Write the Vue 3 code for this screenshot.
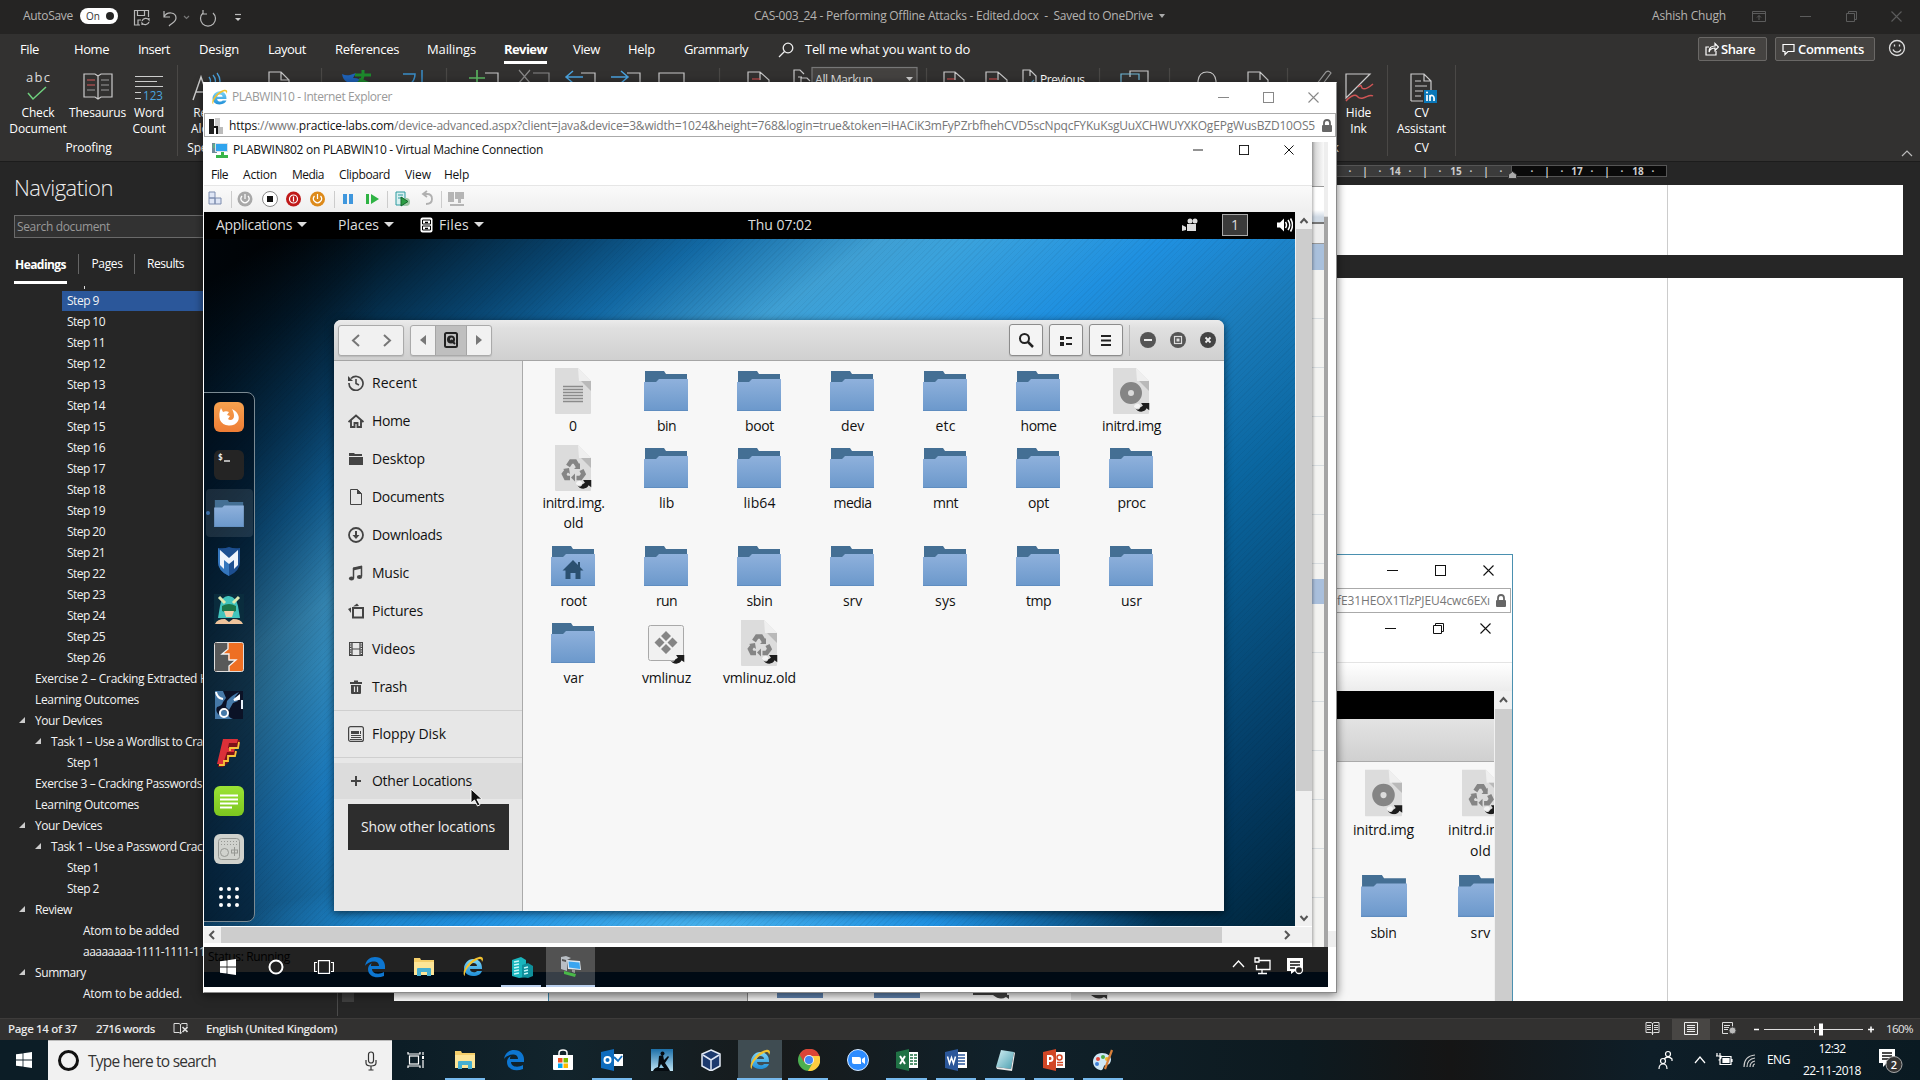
<script setup>
// Spreads a label over a known width, so that labels keep their column in the bars.
const vW = {
  mounted(el, { value }) {
    const natural = el.getBoundingClientRect().width
    const count = el.textContent.trim().length || 1
    el.style.letterSpacing = (value - natural) / count + 'px'
    el.style.flex = 'none'
  }
}

const tabs = [
  ['File', 20, 19], ['Home', 74, 35], ['Insert', 138, 32], ['Design', 199, 40], ['Layout', 268, 38],
  ['References', 335, 64], ['Mailings', 427, 49], ['Review', 504, 43], ['View', 573, 27], ['Help', 628, 27],
  ['Grammarly', 684, 64]
].map((t, i, all) => ({ label: t[0], w: t[2], gap: t[1] - (i ? all[i - 1][1] + all[i - 1][2] : 0) }))

const outline = [
  ...Array.from({ length: 18 }, (_, i) => ({ t: 'Step ' + (i + 9), x: 67, w: i ? 38 : 32, on: i === 0 })),
  { t: 'Exercise 2 – Cracking Extracted Hashes', x: 35, w: 204 },
  { t: 'Learning Outcomes', x: 35, w: 104 },
  { t: 'Your Devices', x: 35, w: 67, tri: true },
  { t: 'Task 1 – Use a Wordlist to Crack', x: 51, w: 163, tri: true },
  { t: 'Step 1', x: 67, w: 32 },
  { t: 'Exercise 3 – Cracking Passwords', x: 35, w: 167 },
  { t: 'Learning Outcomes', x: 35, w: 104 },
  { t: 'Your Devices', x: 35, w: 67, tri: true },
  { t: 'Task 1 – Use a Password Cracker', x: 51, w: 168, tri: true },
  { t: 'Step 1', x: 67, w: 32 },
  { t: 'Step 2', x: 67, w: 32 },
  { t: 'Review', x: 35, w: 37, tri: true },
  { t: 'Atom to be added', x: 83, w: 96 },
  { t: 'aaaaaaaa-1111-1111-1111', x: 83, w: 135 },
  { t: 'Summary', x: 35, w: 51, tri: true },
  { t: 'Atom to be added.', x: 83, w: 99 }
]

const menus = [
  ['File', 211, 17], ['Action', 243, 34], ['Media', 292, 32], ['Clipboard', 339, 51], ['View', 405, 26], ['Help', 444, 25]
].map((t, i, all) => ({ label: t[0], w: t[2], gap: t[1] - (i ? all[i - 1][1] + all[i - 1][2] : 204) }))

const dock = ['firefox', 'terminal', 'folder', 'msf', 'armitage', 'burp', 'maltego', 'faraday', 'leafpad', 'tweak', 'grid']

const places = [
  ['Recent', 'recent', 45], ['Home', 'home', 38], ['Desktop', 'desk', 53], ['Documents', 'docs', 72], ['Downloads', 'down', 70],
  ['Music', 'music', 37], ['Pictures', 'pics', 51], ['Videos', 'video', 43], ['Trash', 'trash', 35]
]

const files = [
  [['0', 'text', 9], ['bin', 'folder', 19], ['boot', 'folder', 29], ['dev', 'folder', 23], ['etc', 'folder', 20], ['home', 'folder', 36], ['initrd.img', 'disc', 59]],
  [['initrd.img.', 'recycle', 62, 'old'], ['lib', 'folder', 15], ['lib64', 'folder', 32], ['media', 'folder', 38], ['mnt', 'folder', 25], ['opt', 'folder', 21], ['proc', 'folder', 28]],
  [['root', 'root', 26], ['run', 'folder', 21], ['sbin', 'folder', 26], ['srv', 'folder', 19], ['sys', 'folder', 21], ['tmp', 'folder', 25], ['usr', 'folder', 21]],
  [['var', 'folder', 20], ['vmlinuz', 'exe', 49], ['vmlinuz.old', 'recycle', 73]]
]

const apps = [
  ['taskview', 0], ['explorer', 1], ['edge', 0], ['store', 0], ['outlook', 1], ['kindle', 0], ['vbox', 0], ['ie', 2],
  ['chrome', 1], ['zoomapp', 0], ['excel', 1], ['word', 1], ['notepad', 1], ['ppt', 1], ['paint', 1]
]
const innerApps = [['edge', 0], ['explorer', 0], ['ie', 0], ['server', 1], ['vm', 2]]
const ruler = [['·', 1350], ['|', 1365], ['·', 1380], ['14', 1395], ['·', 1410], ['|', 1425], ['·', 1440], ['15', 1456], ['·', 1471], ['|', 1486], ['·', 1501], ['', 1516], ['·', 1532], ['|', 1547], ['·', 1562], ['17', 1577], ['·', 1592], ['|', 1607], ['·', 1622], ['18', 1638], ['·', 1653]]
</script>

<template>
  <div class="screen">
    <svg class="defs" width="0" height="0">
      <defs>
        <linearGradient id="gF" x1="0" y1="0" x2="0" y2="1"><stop offset="0" stop-color="#8fb1dc" /><stop offset="1" stop-color="#6b98cb" /></linearGradient>
        <linearGradient id="gO" x1="0" y1="0" x2="0" y2="1"><stop offset="0" stop-color="#f7a24f" /><stop offset="1" stop-color="#ee7d35" /></linearGradient>
        <linearGradient id="gG" x1="0" y1="0" x2="0" y2="1"><stop offset="0" stop-color="#9be335" /><stop offset="1" stop-color="#7cc61f" /></linearGradient>
        <linearGradient id="gI" x1="0" y1="0" x2="0" y2="1"><stop offset="0" stop-color="#7fd6f8" /><stop offset="1" stop-color="#1f8fd8" /></linearGradient>
        <linearGradient id="gK" x1="0" y1="0" x2="0" y2="1"><stop offset="0" stop-color="#1c6fa8" /><stop offset="1" stop-color="#bfe4f4" /></linearGradient>
        <linearGradient id="gN" x1="0" y1="0" x2="1" y2="1"><stop offset="0" stop-color="#d6f1f5" /><stop offset="1" stop-color="#4a9fb0" /></linearGradient>
        <symbol id="link" viewBox="0 0 16 11"><path d="M0 6c2 3 5 3 6 0l3-2-2-3h9v8l-3-2c-2 5-10 5-13-1z" fill="#1d1d1d" /><path d="M-1 5c2-4 7-4 7 0-1 2-5 3-7 0z" fill="#f4f4f4" /></symbol>
        <symbol id="folder" viewBox="0 0 44 40"><path d="M1 0h19l2 3h21v10H1z" fill="#446f94" /><path d="M0 11h12l3-3h29v32H0z" fill="url(#gF)" /><path d="M0 39.5h44" stroke="#5f8dc0" /></symbol>
        <symbol id="root" viewBox="0 0 44 40"><use href="#folder" width="44" height="40" /><path d="M22 14l-10.500 10.500h3V33h5v-6h5v6h5v-8.500h3L29 21v-5h-2v3z" fill="#2b5070" /></symbol>
        <symbol id="sheet" viewBox="0 0 38 46"><path d="M1 0h23l13 13v32q0 1-1 1H2q-1 0-1-1z" fill="#dcdcdc" /><path d="M24 0l13 13H25z" fill="#efefef" /><path d="M27 13h10v10z" fill="#b9b9b9" /></symbol>
        <symbol id="text" viewBox="0 0 38 46"><use href="#sheet" width="38" height="46" /><path d="M9 18.500h20M9 21.500h20M9 24.500h20M9 27.500h20M9 30.500h20M9 33.500h20" stroke="#8b8b8b" stroke-width="1.300" /></symbol>
        <symbol id="disc" viewBox="0 0 38 46"><use href="#sheet" width="38" height="46" /><circle cx="19" cy="25" r="7" fill="none" stroke="#858585" stroke-width="8" /><use href="#link" x="22" y="34" width="16" height="10" /></symbol>
        <symbol id="recycle" viewBox="0 0 38 46"><use href="#sheet" width="38" height="46" /><g fill="none" stroke="#858585" stroke-width="4.500"><path d="M14 21l3-4.500h4l3 5" /><path d="M27.500 25l2 4-3 4h-4" /><path d="M16 33h-4l-2-4 3-4" /></g><path d="M26 18v6h-6zM21 28.500v8l-4-4zM9 24l6-1 1 6z" fill="#858585" /><use href="#link" x="22" y="34" width="16" height="10" /></symbol>
        <symbol id="exe" viewBox="0 0 38 46"><rect x="1.500" y="5.500" width="35" height="35" rx="2" fill="#f1f1f1" stroke="#a9a9a9" /><path d="M19 11l5 5-5 5-5-5zM19 24l5 5-5 5-5-5zM12.500 17.500l5 5-5 5-5-5zM25.500 17.500l5 5-5 5-5-5z" fill="#858585" /><use href="#link" x="22" y="34" width="16" height="10" /></symbol>

        <symbol id="firefox" viewBox="0 0 30 30"><rect width="30" height="30" rx="6" fill="url(#gO)" /><path d="M7 6l2 4c2-1 4-1 6 0l-2 3 3 1-2 3c2 2 6 1 6-3 0-3-1-5-2-7 6 3 8 8 6 12a10 9 0 0 1-18-1c-1-4-1-8 1-12z" fill="#fff" /></symbol>
        <symbol id="terminal" viewBox="0 0 30 30"><rect width="30" height="30" rx="6" fill="#242424" /><text x="4" y="10" font-family="DejaVu Sans Mono, monospace" font-size="8" font-weight="bold" fill="#eee">$</text><path d="M10 11h6" stroke="#fff" stroke-width="1.300" /></symbol>
        <symbol id="msf" viewBox="0 0 30 30"><path d="M4 2q6 1 11-1 5 2 11 1v14q0 9-11 14Q4 25 4 16z" fill="#1d4f91" /><path d="M4 2l11 13v15Q4 25 4 16z" fill="#3476bd" /><path d="M6 4l9 8 9-8v15l-4 4V14l-5 4-5-4v9l-4-4z" fill="#eef3fb" /></symbol>
        <symbol id="armitage" viewBox="0 0 30 30"><rect width="30" height="30" fill="#0a2c3d" /><path d="M6 12Q8 1 15 2t9 10l2 12H4z" fill="#42c4bd" /><path d="M5 3l6 6M25 3l-6 6" stroke="#dfe8b0" stroke-width="3" /><path d="M8 12q7-4 14 0v5q-7 3-14 0z" fill="#1c7548" /><path d="M10 17h10l-2 6h-6z" fill="#f3cfa8" /><path d="M1 30q2-5 10-5l4 3 4-3q8 0 10 5z" fill="#f0c49c" /></symbol>
        <symbol id="burp" viewBox="0 0 30 30"><rect x=".5" y=".5" width="29" height="29" rx="2" fill="#ee6f23" stroke="#ddd" /><path d="M1 1h13v6l-6 5h6v6h7l-6 6v5H1z" fill="#595959" /><path d="M14 1v6l-6 5h7v6h7l-7 6v5" fill="none" stroke="#f3f3f3" stroke-width="1.300" /></symbol>
        <symbol id="maltego" viewBox="0 0 30 30"><rect x="1" y="1" width="28" height="28" fill="#4579a8" /><path d="M9 1h20v28H19q-4-1-5-5-1-4-5-4-5 0-4 5-4-4-2-8 5-1 6-5l3-4z" fill="#0b1226" /><path d="M13 11Q18 5 25 2l-4 5 3 4-5 2-4 7-3-3z" fill="#4579a8" /><path d="M2 2q1 6 7 7M20 10l5-4v3z" fill="none" stroke="#fff" stroke-width="2" /><circle cx="10" cy="23" r="4" fill="none" stroke="#fff" stroke-width="2" /><path d="M28 10v9" stroke="#e8f1fa" stroke-width="2" /></symbol>
        <symbol id="faraday" viewBox="0 0 30 30"><path d="M9 2h17l-1 8h-6v3h4l-2 6h-5l-2 6-5 4H4z" fill="#7d1018" /><path d="M9 1h15l-1 4H15l-1 5h7l-1 4h-7l-4 12H3z" fill="#dc3038" /><path d="M25 4l-1 6h-8v3M22 13l-1 5h-7v5h-4v4H5" fill="none" stroke="#f7c33a" stroke-width="1.800" /></symbol>
        <symbol id="leafpad" viewBox="0 0 30 30"><rect width="30" height="30" rx="6" fill="url(#gG)" /><path d="M6 9.500h18M6 13.500h18M6 17.500h18M6 21.500h12" stroke="#fff" stroke-width="2" /></symbol>
        <symbol id="tweak" viewBox="0 0 30 30"><rect width="30" height="30" rx="6" fill="#d0d2cd" /><g fill="none" stroke="#969893"><rect x="4.500" y="4.500" width="21" height="21" rx="3" /><circle cx="10.500" cy="18.500" r="4" /><rect x="17.500" y="16" width="6" height="3" /><path d="M20.500 13v9" /><path d="M7 7.500h17M7 10.500h17" stroke-dasharray="1 2" /></g></symbol>
        <symbol id="grid" viewBox="0 0 30 30"><g fill="#fff"><circle v-for="n in 9" :key="n" :cx="7 + ((n - 1) % 3) * 8" :cy="7 + Math.floor((n - 1) / 3) * 8" r="2" /></g></symbol>

        <symbol id="recent" viewBox="0 0 16 16"><path d="M3 3.500A7 7 0 1 1 1 8" fill="none" stroke="#444" stroke-width="1.700" /><path d="M0 1v5h5z" fill="#444" /><path d="M8 4v4.500l3 1.500" fill="none" stroke="#444" stroke-width="1.600" /></symbol>
        <symbol id="home" viewBox="0 0 16 16"><path d="M.5 9L8 2.500 15.500 9M3 7.500V14h3.500v-4h3v4H13V7.500" fill="none" stroke="#444" stroke-width="1.900" /></symbol>
        <symbol id="desk" viewBox="0 0 16 16"><path d="M1 2h5l1 1h7v2H1zM1 6h14v8H1z" fill="#444" /></symbol>
        <symbol id="docs" viewBox="0 0 16 16"><path d="M2.500.500h7l4 4v11h-11z" fill="none" stroke="#444" /><path d="M9 0l5 5H9z" fill="#444" /></symbol>
        <symbol id="down" viewBox="0 0 16 16"><circle cx="8" cy="8" r="7" fill="none" stroke="#444" stroke-width="1.800" /><path d="M8 4v5" stroke="#444" stroke-width="2" /><path d="M4.500 8h7L8 12z" fill="#444" /></symbol>
        <symbol id="music" viewBox="0 0 16 16"><path d="M5.500 13V3.500L13.500 2v9.500" fill="none" stroke="#444" stroke-width="1.500" /><path d="M5 2.500l9-2v3l-9 2z" fill="#444" /><ellipse cx="3.500" cy="13.500" rx="2.600" ry="2" fill="#444" /><ellipse cx="11.500" cy="12" rx="2.600" ry="2" fill="#444" /></symbol>
        <symbol id="pics" viewBox="0 0 16 16"><rect x="5" y="5" width="10" height="9.500" fill="none" stroke="#444" stroke-width="2" /><path d="M5 3.500l4-3 2 2.500zM0 6l3-1.500V10z" fill="#444" /></symbol>
        <symbol id="video" viewBox="0 0 16 16"><path d="M2.500 1v14M13.500 1v14" stroke="#444" stroke-width="2" stroke-dasharray="1.200 1.200" /><path d="M1.500 1v14M14.500 1v14M1 1.500h14M1 14.500h14" stroke="#444" /><path d="M4 1.500v13M12 1.500v13M4 8h8" stroke="#444" stroke-width="1.200" /></symbol>
        <symbol id="trash" viewBox="0 0 16 16"><path d="M2 3h12v2H2zM6 1.500h4V3H6zM3 6h10v8q0 1-1 1H4q-1 0-1-1z" fill="#444" /><path d="M6.500 7.500v5.500M9.500 7.500v5.500" stroke="#e6e6e6" stroke-width="1.200" /></symbol>
        <symbol id="floppy" viewBox="0 0 16 16"><rect x=".6" y=".6" width="14.800" height="14.800" rx="2" fill="none" stroke="#444" stroke-width="1.200" /><path d="M3 5h8v3H3zM12 5h1v3h-1z" fill="#444" /><path d="M3 9.500h10M3 11.500h10M2 13.500h12" stroke="#444" stroke-width="1.200" /></symbol>

        <symbol id="win" viewBox="0 0 16 16"><path d="M0 2.300L6.600 1.400V7.600H0zM7.400 1.300L16 0V7.600H7.400zM0 8.400h6.600v6.200L0 13.700zM7.400 8.400H16V16l-8.600-1.300z" fill="#fff" /></symbol>
        <symbol id="taskview" viewBox="0 0 18 18"><g fill="none" stroke="#fff" stroke-width="1.200"><rect x="2.500" y="5" width="9" height="8" /><path d="M1 1v2h12V1M1 17v-2h12v2M16 1v3M16 9v8" /></g><rect x="15" y="5" width="2" height="3" fill="#fff" /></symbol>
        <symbol id="explorer" viewBox="0 0 22 22"><path d="M1 2h6l1 2h13v15H1z" fill="#f5cf6b" /><path d="M1 6h20v13H1z" fill="#fde597" /><path d="M4 20v-7q0-1 1-1h12q1 0 1 1v7h-4v-4H8v4z" fill="#46afd2" /></symbol>
        <symbol id="edge" viewBox="0 0 22 22"><path d="M1 10C2 4 6 1 11 1c7 0 10 5 10 9v3H8c0 5 7 6 12 3v4c-7 3-16 1-16-7 0-3 2-5 4-6-1 1-1 2-1 3h8c0-7-11-5-14 0z" fill="#0d76d1" /></symbol>
        <symbol id="ie" viewBox="0 0 22 22"><path d="M11 3c5 0 9 3 9 9v1H8c0 4 6 4 7 2h5c-1 3-4 5-9 5-6 0-9-4-9-8s4-9 9-9zm-3 7h7c0-4-7-4-7 0z" fill="url(#gI)" /><path d="M3 20c-5-3 4-17 14-19 4-.8 5 2 3 5 0-3-2-4-5-2C7 8 2 16 3 20z" fill="#f2c230" /></symbol>
        <symbol id="store" viewBox="0 0 22 22"><path d="M7 6V4q0-3 4-3t4 3v2" fill="none" stroke="#fff" stroke-width="1.500" /><path d="M1 6h20v14q0 1-1 1H2q-1 0-1-1z" fill="#fff" /><path d="M6 9h4.500v4.500H6z" fill="#f25022" /><path d="M11.500 9H16v4.500h-4.500z" fill="#7fba00" /><path d="M6 14.500h4.500V19H6z" fill="#00a4ef" /><path d="M11.500 14.500H16V19h-4.500z" fill="#ffb900" /></symbol>
        <symbol id="outlook" viewBox="0 0 22 22"><path d="M12 5h10v12H12z" fill="#fff" /><path d="M13 8l4 4 4-5" fill="none" stroke="#0f6cbd" stroke-width="1.800" /><path d="M0 3l13-3v22L0 19z" fill="#0f6cbd" /><circle cx="6.500" cy="11" r="3" fill="none" stroke="#fff" stroke-width="2" /></symbol>
        <symbol id="kindle" viewBox="0 0 22 22"><rect width="22" height="22" fill="url(#gK)" /><circle cx="11.500" cy="4.500" r="2" fill="#050b10" /><path d="M8 7l4-1 1 5 4-4 1 1-4 6 4 6 1 2H2q1-3 5-4z" fill="#050b10" /><path d="M10 15l3 4h-5z" fill="#8cc4df" /></symbol>
        <symbol id="vbox" viewBox="0 0 22 22"><path d="M11 1l9 4v12l-9 5-9-5V5z" fill="#1d3a6e" stroke="#e5ecf7" stroke-width="1.500" /><path d="M3 6l8 5v10M11 11l8-5" fill="none" stroke="#dfe7f5" stroke-width="1.500" /></symbol>
        <symbol id="chrome" viewBox="0 0 22 22"><circle cx="11" cy="11" r="11" fill="#4caf50" /><path d="M1.500 5.500A11 11 0 0 1 21.500 7H11l-5 6z" fill="#db4437" /><path d="M21.500 7A11 11 0 0 1 10 22l5-8.500L13 7z" fill="#ffcd40" /><circle cx="11" cy="11" r="5" fill="#f1f1f1" /><circle cx="11" cy="11" r="4" fill="#4285f4" /></symbol>
        <symbol id="zoomapp" viewBox="0 0 22 22"><circle cx="11" cy="11" r="10.500" fill="#2d8cff" stroke="#d8eaff" /><path d="M5 8h7q2 0 2 2v5H7q-2 0-2-2zM15 10l3-2v7l-3-2z" fill="#fff" /></symbol>
        <symbol id="excel" viewBox="0 0 22 22"><path d="M12 3h10v16H12z" fill="#fff" /><path d="M14 6h3M18 6h3M14 9h3M18 9h3M14 12h3M18 12h3M14 15h3M18 15h3" stroke="#207245" stroke-width="1.500" /><path d="M0 3l13-3v22L0 19z" fill="#207245" /><path d="M4 7l5 8M9 7l-5 8" stroke="#fff" stroke-width="2" /></symbol>
        <symbol id="word" viewBox="0 0 22 22"><path d="M12 3h10v16H12z" fill="#fff" /><path d="M13 6h7M13 9h7M13 12h7M13 15h7" stroke="#2b579a" stroke-width="1.400" /><path d="M0 3l13-3v22L0 19z" fill="#2b579a" /><path d="M2.500 7.500l2 7 2-6 2 6 2-7" fill="none" stroke="#fff" stroke-width="1.500" /></symbol>
        <symbol id="notepad" viewBox="0 0 22 22"><path d="M7 1l13 2-3 17-15-2z" fill="url(#gN)" /><path d="M2 18l15 2 3-17 1 1-3 18-15-2z" fill="#e9e9e9" /></symbol>
        <symbol id="ppt" viewBox="0 0 22 22"><path d="M12 3h10v16H12z" fill="#fff" /><circle cx="16.500" cy="8.500" r="2.500" fill="none" stroke="#d24726" stroke-width="1.500" /><path d="M14 13.500h6M14 16h6" stroke="#d24726" stroke-width="1.400" /><path d="M0 3l13-3v22L0 19z" fill="#d24726" /><path d="M5 16V7h2.500q2 0 2 2.500T7 12H5" fill="none" stroke="#fff" stroke-width="2" /></symbol>
        <symbol id="paint" viewBox="0 0 22 22"><path d="M10 4c7 0 11 5 8 10-2 3-5 1-6 3s-1 5-4 4C-3 18 0 4 10 4z" fill="#cfe7f6" /><circle cx="6" cy="10" r="2" fill="#e5473c" /><circle cx="11" cy="8" r="2" fill="#4bab45" /><circle cx="5" cy="15" r="2" fill="#3f7fd6" /><circle cx="15" cy="10" r="2" fill="#f0b429" /><path d="M20 1l-7 19" stroke="#d9803a" stroke-width="2.200" /></symbol>
        <symbol id="server" viewBox="0 0 22 22"><path d="M1 4l9-3 5 3v17l-7 1-7-2z" fill="#19b5bd" /><path d="M11 9l6-2 5 3v10l-5 2-6-1z" fill="#0e8f9b" /><path d="M3 6l5-1M3 9l5-1M3 12l5-1M3 15l5-1M3 18l5-1M13 12l4-1M13 15l4-1M13 18l4-1" stroke="#c5f6f8" stroke-width="1.500" /></symbol>
        <symbol id="vm" viewBox="0 0 22 22"><path d="M1 1l5-1 5 2-4 2v11l-6-2z" fill="#b9bec4" /><path d="M2 3l4 1v2L2 5z" fill="#555" /><path d="M7 4l13 1 1 9-13-1z" fill="#dfe7ee" /><path d="M8.500 5.500l11 1 .6 6.500-11-1.500z" fill="#3aa5f0" /><path d="M12 13l3 1v3l-3-1z" fill="#999" /><path d="M4 15l12 3-1 3-11-3z" fill="#49b848" /></symbol>
        <symbol id="lock" viewBox="0 0 12 14"><path d="M3 7V4q0-3 3-3t3 3v3" fill="none" stroke="#666" stroke-width="1.800" /><rect x="1" y="6" width="10" height="7" rx="1" fill="#666" /></symbol>
        <symbol id="min" viewBox="0 0 11 11"><path d="M0 5.500h11" stroke="currentColor" /></symbol>
        <symbol id="max" viewBox="0 0 11 11"><rect x=".5" y=".5" width="10" height="10" fill="none" stroke="currentColor" /></symbol>
        <symbol id="rest" viewBox="0 0 11 11"><path d="M.5 2.500h8v8h-8zM2.500 2.500v-2h8v8h-2" fill="none" stroke="currentColor" /></symbol>
        <symbol id="x" viewBox="0 0 11 11"><path d="M.5.500l10 10M10.500.500l-10 10" stroke="currentColor" stroke-width="1.100" /></symbol>
      </defs>
    </svg>

    <!-- Word -->
    <div class="word">
      <header class="title">
        <span v-w="50" class="auto">AutoSave</span>
        <span class="toggle"><b>On</b><i></i></span>
        <svg class="qat" width="110" height="18" viewBox="0 0 110 18" fill="none" stroke="#b9b9b9" stroke-width="1.200">
          <path d="M7 16H1.500V1.500h14V8M4.500 1.500v5h7v-5M5 16v-5h3" /><path d="M9 12a4 4 0 0 1 7-1v-2M16 13a4 4 0 0 1-7 1v2" />
          <path d="M31 2v6h6M31 8c3-6 12-5 12 1 0 4-4 5-7 8" /><path d="M51 7l2.500 2.500L56 7" stroke="#777" />
          <path d="M70 4a7.500 7.500 0 1 0 10 0M70 1v4h4" /><path d="M102 5.500h6" /><path d="M102 9h6l-3 3z" fill="#ccc" stroke="none" />
        </svg>
        <span v-w="399" class="docname">CAS-003_24 - Performing Offline Attacks - Edited.docx&nbsp; -&nbsp; Saved to OneDrive</span>
        <i class="caret"></i>
        <span v-w="74" class="user">Ashish Chugh</span>
        <svg class="dim a" width="14" height="11" fill="none" stroke="#5c5c5c"><path d="M.5.500h13v10H.500zM0 2.500h14M7 9V4.500M5 6.500l2-2 2 2" /></svg>
        <svg class="dim b" width="11" height="11"><use href="#min" /></svg>
        <svg class="dim c" width="11" height="11"><use href="#rest" /></svg>
        <svg class="dim d" width="11" height="11"><use href="#x" /></svg>
      </header>

      <nav class="tabs">
        <span v-for="t in tabs" :key="t.label" class="tab" :class="{ on: t.label === 'Review' }" :style="{ marginLeft: t.gap + 'px' }"><span v-w="t.w">{{ t.label }}</span></span>
        <svg class="find" width="16" height="16" fill="none" stroke="#eee" stroke-width="1.300"><circle cx="10" cy="6" r="4.800" /><path d="M6.500 9.500L1 15" /></svg>
        <span v-w="165" class="tell">Tell me what you want to do</span>
        <span class="btn share"><svg width="14" height="14" fill="none" stroke="#fff" stroke-width="1.200"><path d="M4 5H1v8h10V9M4 10c0-4 2-6 6-6V1.500L13.500 5 10 8.500V6C7 6 5 7 4 10z" /></svg><b v-w="34">Share</b></span>
        <span class="btn comm"><svg width="13" height="13" fill="none" stroke="#fff" stroke-width="1.200"><path d="M1 1.500h11v7H6l-3 3v-3H1z" /></svg><b v-w="66">Comments</b></span>
        <svg class="smile" width="18" height="18" fill="none" stroke="#ddd" stroke-width="1.300"><circle cx="9" cy="9" r="7.500" /><path d="M5 10.500c1.500 3.500 6.500 3.500 8 0M6.500 5.500v2M11.500 5.500v2" /></svg>
      </nav>

      <div class="ribbon">
        <section class="grp proof">
          <div class="cmds">
            <div class="cmd c1"><svg width="30" height="34"><text x="3" y="14" font-family="Open Sans, sans-serif" font-size="13" fill="#ddd" textLength="24">abc</text><path d="M6 24l5 6L24 18" transform="translate(-1 1)" fill="none" stroke="#6fd07e" stroke-width="1.500" /></svg><span>Check<br>Document</span></div>
            <div class="cmd c2"><svg width="30" height="34" fill="none" stroke="#ccc" stroke-width="1.200"><path d="M15 8v23M1 6h11l3 2 3-2h11v23H18l-3 2-3-2H1z" /><path d="M18 12h8M18 17h8M18 22h8M4 22h8" stroke="#999" /><path d="M4 12h8M4 17h8" stroke="#d25a5a" /></svg><span>Thesaurus</span></div>
            <div class="cmd c3"><svg width="30" height="34"><path d="M1 8.500h28M1 13.500h22M1 18.500h28M1 24.500h6M1 30.500h6" stroke="#ccc" stroke-width="1.200" /><text x="9" y="32" font-family="Open Sans, sans-serif" font-size="13" fill="#4aa3df" textLength="20" lengthAdjust="spacingAndGlyphs">123</text></svg><span>Word<br>Count</span></div>
          </div>
          <label>Proofing</label>
        </section>
        <section class="grp speech">
          <div class="cmds"><div class="cmd"><svg width="30" height="34" fill="none"><path d="M1 32L9 9l8 23M4 24h10" stroke="#ccc" stroke-width="1.400" /><path d="M17 9q3 4 0 8M21 7q5 6 0 12M25 5q6 8 0 16" stroke="#4aa3df" stroke-width="1.300" /></svg><span>Read<br>Aloud</span></div></div>
          <label>Speech</label>
        </section>
        <svg class="strip" width="1105" height="20" fill="none" stroke="#c8c8c8" stroke-width="1.200">
          <path d="M34 20V7h12l8 8v5M46 7v8h8" /><path d="M86.500 3v17M211.500 3v17M484.500 3v17M691.500 3v17M864.500 3v17M934.500 3v17M1052.500 3v17" stroke="#4a4846" />
          <path d="M107 9q4 2 8 1l6-2-3 5q8 0 8 4h-14q-4-2-5-8z" fill="#1e62b8" stroke="none" /><path d="M120 10h16M128 5v6q-1 6-7 8M124 14l11 5" stroke="#1d8a2c" stroke-width="3" />
          <path d="M168 9h12q0 7-6 11M187 5v15" stroke="#3a8dc8" stroke-width="1.500" />
          <path d="M250 8h13v12" /><path d="M242 5v15M234 13h16" stroke="#5dbb63" stroke-width="1.600" />
          <path d="M298 8h16v12" stroke="#888" /><path d="M284 5l11 13M295 5l-11 13" stroke="#888" />
          <path d="M346 8h14v12M392 8h13v12M424 20V8h25v12" /><path d="M331 12h17M338 6l-7 6 7 6M376 12h17M386 6l7 6-7 6" stroke="#4aa3df" stroke-width="1.500" />
          <path d="M513 20V7h12l9 8v5M525 7v8M559 20V5h6l4 4M563 12h4M566 20v-7h6l3 3" /><path d="M517 14h8M712 14h8M754 14h8" stroke="#e05050" />
          <path d="M709 20V7h11l9 8v5M720 7v8M751 20V7h12l9 8v5M763 7v8M788 20V5h7l6 6v9M795 5v6" /><path d="M791 17l3 3 5-5" stroke="#4a8fb8" />
          <path d="M895 12V6h18v14" /><path d="M886 20v-11h18v6" stroke="#6fb8d8" />
          <path d="M963 20v-4q1-9 9-9t9 9v4M1013 20V7h12l8 8v5M1025 7v8" /><path d="M1081 20l10-13q3-2 5 1l-9 12" stroke="#999" />
          <rect x="577" y="2.500" width="105" height="20" fill="#444240" stroke="#777" /><path d="M671 12h7l-3.500 4z" fill="#ccc" stroke="none" />
          <text x="580" y="19" font-family="Open Sans, sans-serif" font-size="12.500" fill="#ddd" stroke="none" textLength="58">All Markup</text>
          <text x="805" y="19" font-family="Open Sans, sans-serif" font-size="12" fill="#fff" stroke="none" textLength="45">Previous</text>
        </svg>
        <section class="grp ink">
          <div class="cmds"><div class="cmd"><svg width="30" height="34" fill="none"><path d="M2 6h24L2 30z" stroke="#ccc" stroke-width="1.200" /><path d="M2 33c6-7 10-6 11-5s2 3 6 2 7-4 10-2M14 19c4-3 3-1 4 1 2 2 5 1 11-4" stroke="#d05555" stroke-width="1.500" /></svg><span>Hide<br>Ink</span></div></div>
          <label>Ink</label>
        </section>
        <section class="grp cv">
          <div class="cmds"><div class="cmd"><svg width="30" height="34" fill="none"><path d="M4 33V6h13l7 7v11M17 6v7h7M4 33h12M8 13h6M8 18h12M8 23h8M8 28h6" stroke="#ccc" stroke-width="1.200" /><rect x="17" y="22" width="13" height="13" fill="#0a77b8" /><path d="M20 27v6M23 33v-6M23 30q0-3 2.300-2.500t1.700 5.500" stroke="#fff" stroke-width="1.700" /><circle cx="20" cy="24.500" r="1" fill="#fff" /></svg><span>CV<br>Assistant</span></div></div>
          <label>CV</label>
        </section>
        <svg class="fold" width="12" height="8" fill="none" stroke="#bbb" stroke-width="1.200"><path d="M1 7l5-5 5 5" /></svg>
      </div>

      <div class="body">
        <aside class="nav">
          <h1><span v-w="99">Navigation</span></h1>
          <div class="search"><span v-w="93">Search document</span></div>
          <div class="navtabs"><span class="on"><b v-w="51">Headings</b></span><i></i><span v-w="31">Pages</span><i></i><span v-w="37">Results</span></div>
          <div class="tree">
            <div class="cut"></div>
            <div v-for="(o, i) in outline" :key="i" class="node" :class="{ on: o.on }" :style="{ marginLeft: o.x - 5 + 'px' }">
              <i v-if="o.tri"></i><span v-w="o.w">{{ o.t }}</span>
            </div>
          </div>
        </aside>
        <div class="gut"><i></i></div>
        <main class="doc">
          <div class="ruler"><div class="r1"></div><div class="r2"></div>
            <span v-for="(r, i) in ruler" :key="i" :style="{ left: r[1] - 355 + 'px' }">{{ r[0] }}</span>
            <svg class="ind" width="9" height="8"><path d="M.5 7.500v-4l4-3 4 3v4z" fill="#aaa" stroke="#333" /></svg>
          </div>
          <div class="page p1"><i></i></div>
          <div class="page p2"><i></i>
            <div class="low">
              <div class="l1"></div><div class="l2"></div><div class="l3"><b></b><b></b><svg width="38" height="8"><path d="M0 0h34v2H0zM20 2h16v4l-3-2q-6 4-13-2z" fill="#444" /></svg><svg class="q" width="38" height="8"><path d="M0 0h37v7H0z" fill="#ddd" /><path d="M20 2h16v4l-3-2q-6 4-13-2z" fill="#333" /></svg></div>
            </div>
            <div class="nest">
              <div class="nt n1"><svg width="11" height="11"><use href="#min" /></svg><svg width="11" height="11"><use href="#max" /></svg><svg width="11" height="11"><use href="#x" /></svg></div>
              <div class="na"><span v-w="153">fE31HEOX1TlzPJEU4cwc6EXı</span><svg width="12" height="14"><use href="#lock" /></svg></div>
              <div class="nt n2"><svg width="11" height="11"><use href="#min" /></svg><svg width="11" height="11"><use href="#rest" /></svg><svg width="11" height="11"><use href="#x" /></svg></div>
              <div class="nbar"></div>
              <div class="nv">
                <div class="nk">
                  <div class="nblack"></div><div class="nhead"></div>
                  <div class="nrow r"><div class="nf"><svg width="39" height="48"><use href="#disc" /></svg><span v-w="61">initrd.img</span></div><div class="nf"><svg width="39" height="48"><use href="#recycle" /></svg><span v-w="65">initrd.img.</span><span v-w="21">old</span></div></div>
                  <div class="nrow s"><div class="nf"><svg width="46" height="42"><use href="#folder" /></svg><span v-w="26">sbin</span></div><div class="nf"><svg width="46" height="42"><use href="#folder" /></svg><span v-w="20">srv</span></div></div>
                </div>
                <div class="ns"><svg width="17" height="18"><path d="M5 11l3.500-4 3.500 4" fill="none" stroke="#555" stroke-width="2" /></svg><i></i></div>
              </div>
            </div>
          </div>
        </main>
      </div>

      <footer class="status">
        <span v-w="69" class="s1">Page 14 of 37</span><span v-w="59" class="s2">2716 words</span>
        <svg class="s3" width="15" height="13" fill="none" stroke="#ddd"><path d="M7.500 2.500v9M1 1.500h5l1.500 1 1.500-1h5v3M1 1.500v9h5l1.500 1 1.500-1" /><path d="M9.500 5l5 5M14.500 5l-5 5" stroke-width="1.600" /></svg>
        <span v-w="131" class="s4">English (United Kingdom)</span>
        <svg class="v1" width="15" height="13" fill="none" stroke="#ddd"><path d="M7.500 1v12M1 .500h5l1.500 1 1.500-1h5v10H9l-1.500 1-1.500-1H1zM2 3.500h4M2 5.500h4M2 7.500h4M9 3.500h4M9 5.500h4M9 7.500h4" /></svg>
        <span class="v2"><svg width="14" height="13" fill="none" stroke="#eee"><path d="M.5.500h13v12H.500zM3 3.500h8M3 5.500h8M3 7.500h8M3 9.500h8" /></svg></span>
        <svg class="v3" width="15" height="13" fill="none" stroke="#ddd"><path d="M6 11.500H.500V.500h10v4M2 3.500h6M2 5.500h5M2 7.500h4" /><circle cx="10.500" cy="8.500" r="3.500" fill="#bbb" stroke="#444" /></svg>
        <svg class="v4" width="120" height="14"><path d="M0 7.500h5M114 7.500h6M117 4.500v6" stroke="#fff" stroke-width="1.500" /><path d="M10 7.500h99M60.500 4v7" stroke="#ddd" /><rect x="65" y="1.500" width="4" height="12" fill="#fff" /></svg>
        <span v-w="27" class="v5">160%</span>
      </footer>
    </div>

    <!-- Host taskbar -->
    <div class="taskbar">
      <div class="start"><svg width="16" height="16"><use href="#win" /></svg></div>
      <div class="tsearch"><i></i><span v-w="128">Type here to search</span><svg width="12" height="20" fill="none" stroke="#333" stroke-width="1.200"><rect x="3.500" y="1" width="5" height="11" rx="2.500" /><path d="M1 9v3q0 3 5 3t5-3V9M6 15v4M3.500 19h5" /></svg></div>
      <div class="apps"><div v-for="a in apps" :key="a[0]" :class="['app', 'k' + a[1]]"><svg :width="a[0] === 'taskview' ? 18 : 22" :height="a[0] === 'taskview' ? 18 : 22"><use :href="'#' + a[0]" /></svg></div></div>
      <svg class="tray" width="112" height="22" fill="none" stroke="#fff" stroke-width="1.200">
        <circle cx="10" cy="5" r="2.500" /><path d="M6 10q4-4 8 0v2" /><circle cx="5" cy="12" r="2.500" /><path d="M1 20q0-5 4-5t4 5" /><path d="M37 14l5-6 5 6" /><path d="M62 7.500h11v8H62zM74 10v3M59 4v3M62 4v3M58 7h5v2q-1 2-2.500 2" /><path d="M65 9.500h6v4h-6z" fill="#fff" /><path d="M86 18Q86 7 97 6M89 18q0-8 8-9M92 18q0-5 5-6M95 18q0-3 2-3" stroke="#ccc" />
      </svg>
      <span v-w="23" class="eng">ENG</span>
      <div class="clock"><span v-w="27">12:32</span><span v-w="58">22-11-2018</span></div>
      <svg class="note" width="26" height="26"><path d="M1 1h16v14H9l-4 4v-4H1z" fill="#fff" /><path d="M4 5h10M4 8h10M4 11h7" stroke="#111" stroke-width="1.300" /><circle cx="16" cy="16.500" r="8" fill="#333" stroke="#aaa" /><text x="16" y="20.500" text-anchor="middle" font-family="Open Sans, sans-serif" font-size="11" font-weight="600" fill="#fff">2</text></svg>
    </div>

    <!-- Internet Explorer window -->
    <div class="iew">
      <div class="itit"><svg width="17" height="17"><use href="#ie" /></svg><span v-w="160">PLABWIN10 - Internet Explorer</span>
        <div class="ctl"><svg width="11" height="11"><use href="#min" /></svg><svg width="11" height="11"><use href="#max" /></svg><svg width="11" height="11"><use href="#x" /></svg></div></div>
      <div class="addr"><svg class="fav" width="14" height="16"><path d="M0 1h5v15H0z" fill="#222" /><path d="M6 0h5v9H6z" fill="#ccc" /><path d="M5 8h4v8H7v-6H5z" fill="#111" /><path d="M9 9h5v7H9z" fill="#bbb" /></svg>
        <span v-w="1086">https<em>://www.</em>practice-labs.com<em>/device-advanced.aspx?client=java&amp;device=3&amp;width=1024&amp;height=768&amp;login=true&amp;token=iHACiK3mFyPZrbfhehCVD5scNpqcFYKuKsgUuXCHWUYXKOgEPgWusBZD10OS5</em></span>
        <svg class="lk" width="12" height="14"><use href="#lock" /></svg></div>
      <div class="rest">
        <div class="vmw">
          <div class="vtit"><svg width="17" height="17" viewBox="0 0 17 17"><path d="M1 1h5v10H1z" fill="#6f8c9a" /><path d="M2 3h3M2 5h3" stroke="#4fd07a" /><path d="M4 1h13v9H4z" fill="#d8e2ea" /><path d="M5 2h11v7H5z" fill="#2fa4ee" /><path d="M10 10h3v3h4v3H5v-3h5z" fill="#39b54a" /></svg><span v-w="310">PLABWIN802 on PLABWIN10 - Virtual Machine Connection</span>
            <div class="ctl"><svg width="10" height="10"><use href="#min" /></svg><svg width="10" height="10"><use href="#max" /></svg><svg width="10" height="10"><use href="#x" /></svg></div></div>
          <div class="vmenu"><span v-for="m in menus" :key="m.label" :style="{ marginLeft: m.gap + 'px' }"><span v-w="m.w">{{ m.label }}</span></span></div>
          <div class="vtool">
            <svg width="280" height="20" viewBox="0 0 280 20">
              <path d="M5 3h6v6H5zM5 9h6v6H5zM11 9h6v6h-6z" fill="#dfe6f5" stroke="#7d8cae" /><path d="M27.500 2v17M130.500 2v17M183.500 2v17M237.500 2v17" stroke="#ccc" />
              <circle cx="41" cy="10" r="7.500" fill="#a8a8a8" /><circle cx="66" cy="10" r="7.500" fill="#fff" stroke="#888" /><path d="M63 7h6v6h-6z" fill="#111" /><circle cx="89.500" cy="10" r="7.500" fill="#c01a1a" /><circle cx="113.500" cy="10" r="7.500" fill="#dd8a1a" />
              <g fill="none" stroke="#fff" stroke-width="1.200"><path d="M41 5v5M38 7a4 4 0 1 0 6 0M113.500 5v5M110.500 7a4 4 0 1 0 6 0" /><circle cx="89.500" cy="10" r="4" /><path d="M89.500 7.500v5" /></g>
              <path d="M139 5h4v10h-4zM145 5h4v10h-4z" fill="#3f97dd" /><path d="M162 5h3v10h-3zM167 5l8 5-8 5z" fill="#2fb344" />
              <path d="M192 3h9v13h-9z" fill="#d9f0f0" stroke="#2c9ba0" /><path d="M194 6h5M194 9h5" stroke="#2c9ba0" /><circle cx="202" cy="13" r="4" fill="#9fc7a5" /><path d="M197 8l7 4.500-7 4.500z" fill="#2c9e43" stroke="#14672a" />
              <path d="M220 5h3q5 0 5 5t-6 5M223 2l-4 3 4 3" fill="none" stroke="#b0b0b0" stroke-width="1.800" /><path d="M244 3h6v10h-6zM251 3h9v7h-9zM254 10h3v4h-3zM246 15h14v2h-14z" fill="#b5b5b5" />
            </svg>
          </div>
          <div class="vscr">
            <div class="kali">
              <div class="kbar">
                <span v-w="76" class="k1">Applications</span><i></i><span v-w="41" class="k2">Places</span><i></i>
                <svg class="kc" width="13" height="16"><rect x=".5" y=".5" width="12" height="15" rx="2" fill="#fff" /><path d="M2.500 3h8v4h-8zM2.500 9h8v4h-8z" fill="#fff" stroke="#000" /><path d="M5 5.500h3M5 11.500h3" stroke="#000" stroke-width="1.300" /></svg>
                <span v-w="30" class="k3">Files</span><i></i><span v-w="64" class="k4">Thu 07:02</span>
                <svg class="kv" width="18" height="14" fill="#ddd"><path d="M5 6h9v7H5zM0 7l4 2v3l-4 1z" /><circle cx="8" cy="3" r="2.500" /><circle cx="13" cy="3" r="2.500" /></svg>
                <b>1</b>
                <svg class="ko" width="17" height="16" fill="none" stroke="#fff" stroke-width="1.500"><path d="M1 5.500h3l4-4v13l-4-4H1z" fill="#fff" stroke="none" /><path d="M9.500 5q2 3 0 6M12 3q3.500 5 0 10M14.500 1.500q4 6.500 0 13" /></svg>
              </div>
              <div class="dock"><div v-for="d in dock" :key="d" class="dk" :class="{ on: d === 'folder' }"><svg :width="30" :height="d === 'folder' ? 27 : 30"><use :href="'#' + d" /></svg></div></div>
              <div class="naut">
                <div class="nh">
                  <div class="bg2"><svg width="65" height="31" fill="none" stroke="#777" stroke-width="2"><path d="M20 10l-6 5.500 6 5.500M45 10l6 5.500-6 5.500" /></svg></div>
                  <div class="path"><span><svg width="6" height="10"><path d="M6 0v10L0 5z" fill="#777" /></svg></span><span class="dn"><svg width="14" height="16"><rect x="1" y="1" width="12" height="14" rx="1.500" fill="none" stroke="#222" stroke-width="2" /><circle cx="7" cy="7.500" r="4" fill="#222" /><circle cx="7.500" cy="7" r="1.500" fill="#bbb" /><path d="M7 8l4 4" stroke="#222" stroke-width="2" /></svg></span><span><svg width="6" height="10"><path d="M0 0v10l6-5z" fill="#777" /></svg></span></div>
                  <div class="hb f"><svg width="16" height="16" fill="none" stroke="#222" stroke-width="2"><circle cx="6.500" cy="6.500" r="4.500" /><path d="M10 10l5 5" stroke-width="2.500" /></svg></div>
                  <div class="hb"><svg width="12" height="11"><path d="M0 1h4v4H0zM0 7h4v4H0zM6 2h6v2H6zM6 8h6v2H6z" fill="#222" /></svg></div>
                  <div class="hb"><svg width="10" height="11"><path d="M0 0h10v2H0zM0 4.500h10v2H0zM0 9h10v2H0z" fill="#222" /></svg></div>
                  <u></u>
                  <svg width="76" height="16"><circle cx="8" cy="8" r="8" fill="#555" /><circle cx="38" cy="8" r="8" fill="#555" /><circle cx="68" cy="8" r="8" fill="#444" /><path d="M4 8h8M65.500 5.500l5 5M70.500 5.500l-5 5" stroke="#eee" stroke-width="1.800" /><rect x="34.500" y="4.500" width="7" height="7" fill="none" stroke="#ddd" stroke-width="1.200" /><rect x="36.500" y="6.500" width="3" height="3" fill="#ddd" /></svg>
                </div>
                <div class="nb">
                  <div class="side">
                    <div v-for="p in places" :key="p[0]" class="pl"><svg width="16" height="16"><use :href="'#' + p[1]" /></svg><span v-w="p[2]">{{ p[0] }}</span></div>
                    <hr><div class="pl"><svg width="16" height="16"><use href="#floppy" /></svg><span v-w="74">Floppy Disk</span></div><hr>
                    <div class="pl ot"><svg width="16" height="16"><path d="M8 3v10M3 8h10" stroke="#444" stroke-width="2" /></svg><span v-w="100">Other Locations</span></div>
                    <div class="tip"><span v-w="134">Show other locations</span></div>
                    <svg class="cur" width="14" height="19"><path d="M1 1v14l3.500-3 3 6 2.500-1.200-3-5.600H12z" fill="#111" stroke="#fff" /></svg>
                  </div>
                  <div class="icons">
                    <div v-for="(r, i) in files" :key="i" class="row" :class="'w' + i">
                      <div v-for="f in r" :key="f[0]" class="fi"><div class="ic"><svg v-if="f[1] === 'folder' || f[1] === 'root'" width="44" height="40"><use :href="'#' + f[1]" /></svg><svg v-else width="38" height="46"><use :href="'#' + f[1]" /></svg></div><span v-w="f[2]">{{ f[0] }}</span><span v-if="f[3]" v-w="20">{{ f[3] }}</span></div>
                    </div>
                  </div>
                </div>
              </div>
            </div>
            <div class="vs"><svg width="16" height="17"><path d="M4.500 11L8 7l3.500 4" fill="none" stroke="#555" stroke-width="2" /></svg><i></i><svg class="dn2" width="16" height="16"><path d="M4.500 6L8 10l3.500-4" fill="none" stroke="#555" stroke-width="2" /></svg></div>
          </div>
          <div class="hs"><svg width="17" height="16"><path d="M10 4L6 8l4 4" fill="none" stroke="#555" stroke-width="2" /></svg><i></i><svg class="hr" width="17" height="16"><path d="M6 4l4 4-4 4" fill="none" stroke="#555" stroke-width="2" /></svg></div>
        </div>
        <div class="rem"><div class="ra"></div><div class="rb"></div><div class="rc"></div><div class="rd"></div><div class="re"></div><div class="rd"></div></div>
      </div>
      <div class="itb">
        <span v-w="82" class="run">Status: Running</span>
        <div class="ia"><svg width="16" height="16"><use href="#win" /></svg></div>
        <div class="ia"><svg width="16" height="16"><circle cx="8" cy="8" r="6.500" fill="none" stroke="#fff" stroke-width="2" /></svg></div>
        <div class="ia"><svg width="20" height="14" fill="none" stroke="#fff" stroke-width="1.200"><path d="M4.500.600h11v12.800h-11zM3 2.500H.600v9H3M17 2.500h2.400v9H17" /></svg></div>
        <div v-for="a in innerApps" :key="a[0]" :class="['ia', 'k' + a[1]]"><svg width="22" height="22"><use :href="'#' + a[0]" /></svg></div>
        <svg class="it" width="72" height="24" fill="none" stroke="#fff" stroke-width="1.300"><path d="M1 12l5.500-6 5.500 6" /><path d="M27 5.500h11v9H24.500V10M30 15v3M26 18.500h9M23 3h4v4h-4z" /><path d="M55 3h16v13h-8l-4 3v-3h-4z" fill="#fff" stroke="none" /><path d="M58 7h10M58 10h10M58 13h5" stroke="#111" /><circle cx="67" cy="15" r="3.500" fill="#222" /></svg>
      </div>
    </div>
  </div>
</template>

<style>
html, body { margin: 0; background: #262626; overflow: hidden; }
</style>
<style scoped>
* { box-sizing: border-box; }
.screen { position: relative; width: 1920px; height: 1080px; overflow: hidden; font: 12px/16px "Open Sans", "Noto Sans", sans-serif; color: #fff; display: flex; flex-direction: column; }
.defs { position: absolute; }
svg { display: block; flex: none; }
span, b, label { white-space: nowrap; }
.word { height: 1040px; display: flex; flex-direction: column; background: #262626; }
.title { height: 34px; background: #252423; display: flex; align-items: center; padding: 0 0 2px 23px; color: #b5b3b1; }
.toggle { width: 38px; height: 16px; margin-left: 7px; background: #fff; border-radius: 8px; display: flex; align-items: center; padding: 0 4px 0 6px; justify-content: space-between; }
.toggle b { font: 10px "Open Sans", sans-serif; color: #333; }
.toggle i { width: 8px; height: 8px; border-radius: 50%; background: #252423; }
.qat { margin-left: 15px; margin-top: 3px; }
.docname { margin-left: 511px; }
.caret { margin-left: 6px; border: 3px solid transparent; border-top: 4px solid #aaa; border-bottom: 0; }
.user { margin-left: 487px; }
.dim { color: #5c5c5c; }
.dim.a { margin-left: 26px; } .dim.b { margin-left: 34px; } .dim.c { margin-left: 35px; } .dim.d { margin-left: 34px; }
.tabs { height: 31px; background: #323130; display: flex; align-items: center; font-size: 13px; flex: none; }
.tab { height: 29px; display: flex; align-items: center; padding-bottom: 1px; }
.tab.on { font-weight: 700; border-bottom: 3px solid #fff; padding-top: 2px; padding-bottom: 0; margin-top: 0; height: 28px; }
.tell { padding-bottom: 1px; }
.find { margin: 0 11px 0 30px; }
.btn { height: 24px; border: 1px solid #6a6866; border-radius: 2px; background: #454341; display: flex; align-items: center; gap: 2px; margin-left: 8px; padding-left: 6px; margin-top: -1px; }
.btn b { font-weight: 600; }
.share { width: 69px; margin-left: 728px; }
.comm { width: 100px; padding-left: 6px; gap: 3px; }
.smile { margin: -3px 0 0 13px; }
.ribbon { height: 96px; flex: none; background: #323130; display: flex; position: relative; }
.grp { display: flex; flex-direction: column; height: 91px; padding-top: 1px; border-right: 1px solid #4a4846; }
.cmds { display: flex; height: 79px; justify-content: center; }
.cmd { display: flex; flex-direction: column; align-items: center; width: 58px; text-align: center; }
.cmd svg { margin: 2px 0 3px; overflow: visible; }
.grp label { text-align: center; line-height: 16px; letter-spacing: -.2px; }
.cmd span { letter-spacing: -.15px; }
.proof { width: 178px; } .proof .cmds { justify-content: flex-start; padding-left: 9px; }
.cmd.c2 { width: 61px; } .cmd.c3 { width: 42px; }
.speech { width: 58px; border: 0; }
.strip { margin: 0 0 0 -1px; }
.ink { width: 48px; } .ink .cmds { margin-left: -10px; } .cv { width: 68px; }
.ink label { margin-left: -66px; }
.fold { margin: 84px 0 0 445px; }
.body { height: 857px; display: flex; flex: none; border-top: 1px solid #1c1c1c; }
.nav { width: 338px; border-right: 1px solid #4a4a4a; height: 854px; }
h1 { margin: 0; font: 22px/30px "Open Sans", sans-serif; font-weight: 300; padding: 10px 0 0 14px; color: #eee; height: 53px; }
.search { margin-left: 14px; height: 23px; border: 1px solid #6a6a6a; background: #323232; padding: 3px 2px; color: #999; }
.navtabs { display: flex; align-items: center; height: 44px; padding: 1px 0 0 14px; margin-top: 3px; }
.navtabs .on { border-bottom: 3px solid #fff; width: 53px; height: 35px; padding-top: 8px; padding-left: 1px; margin-top: 6px; }
.navtabs i { width: 1px; height: 20px; background: #666; margin-left: 10px; }
.navtabs i + span { margin-left: 13px; }
.navtabs span + i + span { margin-left: 12.500px; }
.navtabs span + i { margin-left: 11px; }
.tree { padding-top: 1px; }
.tree .cut { height: 3px; width: 1px; background: #ddd; margin: 0 0 2px 84px; }
.node { height: 21px; display: flex; align-items: center; padding-left: 5px; position: relative; color: #f3f3f3; }
.node.on { background: #2b579a; height: 20px; }
.node i { position: absolute; left: -11px; top: 7px; border: 3px solid transparent; border-right-color: #ccc; border-bottom-color: #ccc; }
.gut { width: 17px; display: flex; align-items: flex-end; padding: 0 0 16px 4px; }
.gut i { width: 12px; height: 14px; background: #3f3f3f; }
.doc { flex: 1; display: flex; flex-direction: column; padding-left: 39px; position: relative; }
.ruler { position: relative; height: 12px; margin: 3px 0 8px -39px; display: flex; font: bold 10px/12px "Open Sans", sans-serif; }
.ruler span { position: absolute; transform: translateX(-50%); color: #ccc; }
.r1 { width: 1157px; background: #3b3b3b; border: 1px solid #555; } .r2 { width: 155px; background: #0a0a0a; border: 1px solid #555; border-left: 0; }
.ind { position: absolute; left: 1153px; top: 6px; }
.page { width: 1509px; background: #fff; position: relative; display: flex; }
.page > i { position: absolute; left: 1273px; top: 0; bottom: 0; width: 1px; background: #ccc; }
.p1 { height: 70px; } .p2 { height: 723px; margin-top: 23px; }
.low { width: 943px; display: flex; align-items: flex-end; }
.l1 { width: 154px; } .l2 { width: 200px; height: 10px; background: #d6d6d6; border-left: 1px solid #3a87ad; border-right: 1px solid #888; }
.l3 { flex: 1; height: 10px; background: #f7f7f7; display: flex; padding: 2px 0 0 29px; }
.l3 b { width: 46px; height: 5px; background: #5f83b0; margin-right: 51px; } .l3 svg { margin-left: 2px; } .l3 .q { margin-left: 60px; }
.nest { width: 176px; margin-top: 276px; border: 1px solid #4a90b0; border-width: 1px 1px 0 0; background: #fff; color: #111; overflow: hidden; display: flex; flex-direction: column; }
.nt { display: flex; align-items: center; gap: 37px; padding-left: 50px; flex: none; }
.n1 { height: 33px; padding-bottom: 2px; } .n2 { height: 32px; padding: 0 0 1px 48px; margin-bottom: 17px; gap: 36.500px; }
.na { height: 25px; border: 1px solid #aaa; border-left: 0; width: 174px; display: flex; align-items: center; color: #777; font-size: 12px; flex: none; justify-content: space-between; padding-right: 3px; }
.nbar { height: 29px; flex: none; border-top: 1px solid #e4e4e4; background: linear-gradient(#fff, #ececec); }
.nv { flex: 1; display: flex; overflow: hidden; }
.nk { width: 157px; background: #f7f7f7; overflow: hidden; flex: none; font-size: 14px; }
.nblack { height: 28px; background: #000; } .nhead { height: 43px; background: linear-gradient(#e3e3e3, #d0d0d0); border-bottom: 1px solid #aaa; }
.nrow { display: flex; width: 196px; margin-left: -2px; }
.nf { width: 97px; flex: none; display: flex; flex-direction: column; align-items: center; line-height: 21px; }
.nrow.r { height: 105px; padding-top: 7px; } .nrow.r svg { margin-bottom: 2px; } .nrow.s { padding-top: 8px; } .nrow.s svg { margin-bottom: 5px; }
.ns { width: 18px; background: #f0f0f0; display: flex; flex-direction: column; padding-left: 1px; } .ns i { flex: 1; background: #cdcdcd; }
.status { height: 22px; background: #323130; border-top: 1px solid #3d3b3a; display: flex; align-items: center; font-weight: 600; font-size: 11.5px; color: #e8e8e8; padding-bottom: 2px; }
.s1 { margin-left: 8px; } .s2 { margin-left: 19px; } .s3 { margin-left: 18px; } .s4 { margin-left: 18px; }
.v1 { margin-left: 1308px; } .v2 { width: 38px; height: 21px; background: #484644; margin: 2px 0 0 12px; padding-bottom: 2px; display: flex; align-items: center; justify-content: center; }
.v3 { margin-left: 12px; } .v4 { margin-left: 17px; } .v5 { margin-left: 12px; font-weight: 400; }
.taskbar { height: 40px; background: linear-gradient(90deg, #0c1d26 400px, #12242c 560px, #171a1b 780px, #10212a 1000px, #0d1a20 1300px, #151515 1450px, #0e1e28 1650px, #0a1a22); display: flex; align-items: center; flex: none; }
.start { width: 48px; display: flex; justify-content: center; }
.tsearch { width: 344px; height: 40px; background: #f1f1f1; display: flex; align-items: center; color: #333; font-size: 15.5px; padding-left: 10px; border-top: 1px solid #bbb; }
.tsearch i { width: 21px; height: 21px; border: 3px solid #111; border-radius: 50%; margin-right: 9px; }
.tsearch svg { margin-left: 149px; }
.apps { display: flex; height: 40px; flex: none; margin-left: -.5px; }
.app { width: 49.100px; display: flex; align-items: center; justify-content: center; position: relative; }
.app.k1::after, .app.k2::after, .ia.k1::after, .ia.k2::after { content: ""; position: absolute; bottom: 0; left: 4px; right: 5px; height: 2px; background: #76b9ed; }
.app.k2 { background: linear-gradient(#3f4c52, #3f4c52) center/44px 100% no-repeat; }
.app.k2::after { left: 2px; right: 2px; }
.tray { margin-left: 530px; }
.eng { margin-left: -3px; }
.clock { width: 60px; margin-left: 12px; display: flex; flex-direction: column; align-items: center; justify-content: space-between; height: 38px; line-height: 16px; }
.note { margin: 2px 0 0 16px; }
.iew { position: absolute; left: 203px; top: 82px; width: 1134px; height: 911px; background: #fff; border: 1px solid #8a8a8a; border-left-color: #fff; border-top-color: #fff; box-shadow: 0 2px 9px rgba(0, 0, 0, .55); color: #111; }
.itit { height: 30px; display: flex; align-items: center; padding: 0 0 2px 7px; color: #999; }
.itit span { margin-left: 4px; }
.ctl { display: flex; margin-left: auto; }
.itit .ctl { gap: 34px; margin-right: 17px; color: #888; }
.addr { height: 24px; border: 1px solid #aaa; width: 1132px; display: flex; align-items: center; padding: 1px 0 0 4px; font-size: 12px; }
.addr em { font-style: normal; color: #767676; }
.addr .fav { margin-right: 6px; } .addr .lk { margin-left: 6px; }
.rest { display: flex; height: 810px; background: linear-gradient(#fff 98%, #eee 98%); }
.vmw { width: 1108px; background: #fff; display: flex; flex-direction: column; box-shadow: 1px 0 3px rgba(0, 0, 0, .35); clip-path: inset(5px -6px 0 0); }
.vtit { height: 26px; display: flex; align-items: center; padding-left: 7px; }
.vtit > span { margin-left: 5px; }
.vtit .ctl { gap: 35.500px; margin-right: 18px; }
.vmenu { height: 21px; margin-top: 1px; display: flex; align-items: center; }
.vtool { height: 27px; border-top: 1px solid #e6e6e6; background: linear-gradient(#fafafa, #efefef); display: flex; align-items: center; padding-bottom: 1px; }
.vscr { display: flex; height: 714px; }
.kali { position: relative; width: 1091px; height: 714px; overflow: hidden; font-size: 14px;
  background: repeating-linear-gradient(135deg, rgba(0, 0, 0, .045) 0 1px, transparent 1px 4px), radial-gradient(ellipse 460px 60px at 500px 714px, #47b0ea, #1f90e0 50%, transparent), linear-gradient(90deg, rgba(0, 8, 16, .6), transparent 16%), linear-gradient(to bottom right, #000 5%, #021a2b 11%, #08436d 19%, #1268a3 25%, #3f9fd3 33%, #3aa2dc 37%, #1f90e0 46%, #1b7cbb 55%, #0a66a0 66%, #075080 77%, #033a62 88%, #00263c); }
.kbar { height: 27px; background: #000; color: #ddd; display: flex; align-items: center; padding: 0 0 2px 12px; }
.kbar i { border: 5px solid transparent; border-top-color: #ddd; border-bottom: 0; margin-left: 5px; }
.kbar .k2 { margin-left: 31px; } .kc { margin-left: 26px; } .k3 { margin-left: 6px; } .k4 { margin-left: 264px; } .kv { margin-left: 370px; }
.kbar b { width: 26px; height: 22px; border: 1px solid #aaa; background: #3a3a3a; margin-left: 22px; font-weight: 400; text-align: center; line-height: 20px; }
.ko { margin-left: 28px; }
.dock { position: absolute; left: -1px; top: 180px; width: 52px; height: 530px; border: 1px solid #7b8a93; border-radius: 0 8px 8px 0; background: rgba(0, 10, 20, .55); display: flex; flex-direction: column; align-items: center; }
.dk { height: 48px; width: 47px; display: flex; align-items: center; justify-content: center; position: relative; flex: none; }
.dk.on { background: #ffffff1a; border-radius: 4px; }
.dk.on::before { content: ""; position: absolute; left: 0; top: 22px; width: 4px; height: 4px; border-radius: 50%; background: #3b6ea8; }
.naut { position: absolute; left: 130px; top: 108px; width: 890px; height: 591px; border-radius: 7px 7px 0 0; overflow: hidden; background: #f7f7f7; box-shadow: 0 2px 8px rgba(0, 0, 0, .6); display: flex; flex-direction: column; }
.nh { height: 41px; background: linear-gradient(#ebebeb, #e0e0e0 20%, #d0d0d0); border-bottom: 1px solid #a5a5a5; display: flex; align-items: center; padding-left: 4px; }
.bg2, .path, .hb { height: 31px; border: 1px solid #aaa; border-radius: 3px; background: #f1f1f1; display: flex; align-items: center; justify-content: center; box-shadow: 0 1px 1px #bbb; }
.bg2 { width: 66px; } .path { width: 82px; margin-left: 6px; overflow: hidden; }
.path span { flex: 1; height: 100%; display: flex; align-items: center; justify-content: center; }
.path .dn { flex: none; width: 32px; background: #bfbfbf; border: 1px solid #a5a5a5; border-width: 0 1px; }
.hb { width: 34px; height: 32px; margin-right: 6px; border-color: #8c8c8c; background: #f4f4f4; } .hb.f { margin-left: 517px; }
.nh u { width: 1px; height: 31px; background: #bbb; margin: 0 10px 0 0; }
.nb { flex: 1; display: flex; }
.side { width: 189px; background: #e7e7e7; border-right: 1px solid #aaa; padding-top: 3px; position: relative; }
.pl { height: 38px; display: flex; align-items: center; padding-left: 14px; gap: 8px; }
.side hr { height: 1px; border: 0; background: #cfcfcf; margin: 4px 0; }
.pl.ot { background: #dcdcdc; height: 36px; margin-top: 5px; }
.tip { position: absolute; left: 14px; top: 443px; width: 161px; height: 46px; background: #2d2d2d; color: #eee; display: flex; align-items: center; padding-left: 13px; }
.cur { position: absolute; left: 136px; top: 427px; }
.icons { padding: 5px 0 0 4px; }
.row { display: flex; height: 77px; } .row.w1 { height: 98px; }
.fi { width: 93px; display: flex; flex-direction: column; align-items: center; line-height: 20px; }
.ic { height: 50px; display: flex; align-items: center; justify-content: center; margin-left: -2px; }
.vs { width: 17px; background: #f0f0f0; padding-left: 1px; display: flex; flex-direction: column; } .vs i { height: 562px; background: #cdcdcd; } .vs .dn2 { margin-top: auto; }
.hs { height: 17px; border-top: 1px solid #fff; background: #f0f0f0; display: flex; } .hs i { width: 1001px; background: #cdcdcd; } .hs .hr { margin-left: 57px; }
.rem { width: 16px; margin-top: 5px; background: #f3f3f1; border: 0 solid #a5a5a5; border-right-width: 4px; border-image: linear-gradient(#eee 75px, #a5a5a5 76px) 1; }
.ra { height: 45px; background: linear-gradient(90deg, #ccc, #fafafa); border-bottom: 1px solid #999; } .rb { height: 57px; background: linear-gradient(#fff 23px, #cfd9e4 30px, #cfd9e4 35px, #777 35px, #777 37px, #eee 37px); border-bottom: 1px solid #999; } .rc { height: 26px; background: #a9c0dc; } .rd { height: 309px; background: repeating-linear-gradient(#f3f3f1 0 48px, #d8dde0 48px 49px); } .re { height: 25px; background: #a9bfdc; }
.rem > .rd:last-child { height: 330px; }
.itb { height: 40px; width: 1124px; background: linear-gradient(#222 25px, #000a14 25px); display: flex; position: relative; }
.run { position: absolute; left: 4px; top: 2px; color: #000; }
.ia { width: 48px; height: 40px; display: flex; align-items: center; justify-content: center; position: relative; }
.ia:nth-child(5) { margin-left: 3px; }
.ia:nth-child(n+5) { width: 48.800px; }
.ia.k2 { background: rgba(255, 255, 255, .22); }
.ia.k1::after, .ia.k2::after { background: #b9cfee; } .ia.k2::after { left: 0; right: 0; }
.it { margin: 8px 24px 0 auto; }
</style>
